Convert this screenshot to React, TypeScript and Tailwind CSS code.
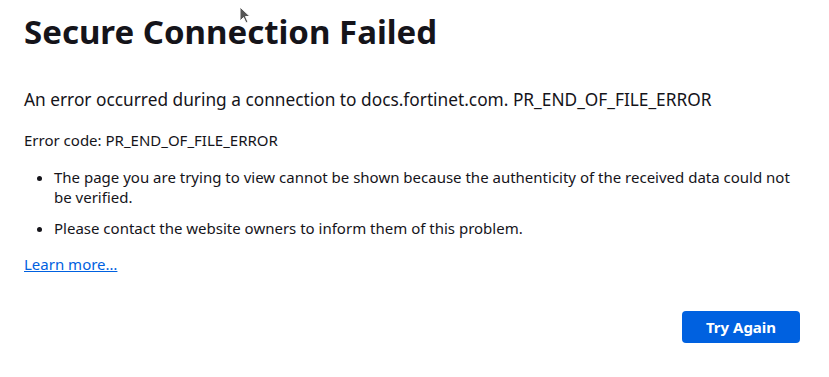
import React from 'react';

const Cursor: React.FC = () => (
  <svg className="absolute left-[239px] top-[6px]" width="12" height="18" viewBox="0 0 12 18">
    <path d="M1 1 L1 15 L4.5 11.5 L7 17 L9 16 L6.5 10.5 L11 10.5 Z" fill="#555" stroke="#fff" strokeWidth="1" />
  </svg>
);

export default function App() {
  return (
    <div className="relative min-h-[377px] w-full bg-white text-[#15141a]" style={{ fontFamily: '"Noto Sans", "Open Sans", sans-serif' }}>
      <Cursor />
      <div className="px-6 pt-[10px]">
        <h1 className="text-[33px] font-bold leading-[44px]">Secure Connection Failed</h1>
        <p className="mt-[34px] text-[17.3px] leading-[24px]">
          An error occurred during a connection to docs.fortinet.com. PR_END_OF_FILE_ERROR
        </p>
        <p className="mt-[18px] text-[15px] leading-[20px]">Error code: PR_END_OF_FILE_ERROR</p>
        <ul className="mt-[17px] list-disc pl-[30px] text-[15px] leading-[20px]">
          <li className="mb-[11px]">
            The page you are trying to view cannot be shown because the authenticity of the received data could not be verified.
          </li>
          <li>Please contact the website owners to inform them of this problem.</li>
        </ul>
        <a href="#" className="mt-[16px] inline-block text-[15px] leading-[20px] text-[#0061e0] underline">
          Learn more…
        </a>
        <div className="mt-[35px] flex justify-end pr-[5px]">
          <button className="h-[32px] w-[118px] rounded-[4px] bg-[#0061e0] text-[15px] font-bold text-white">
            Try Again
          </button>
        </div>
      </div>
    </div>
  );
}
